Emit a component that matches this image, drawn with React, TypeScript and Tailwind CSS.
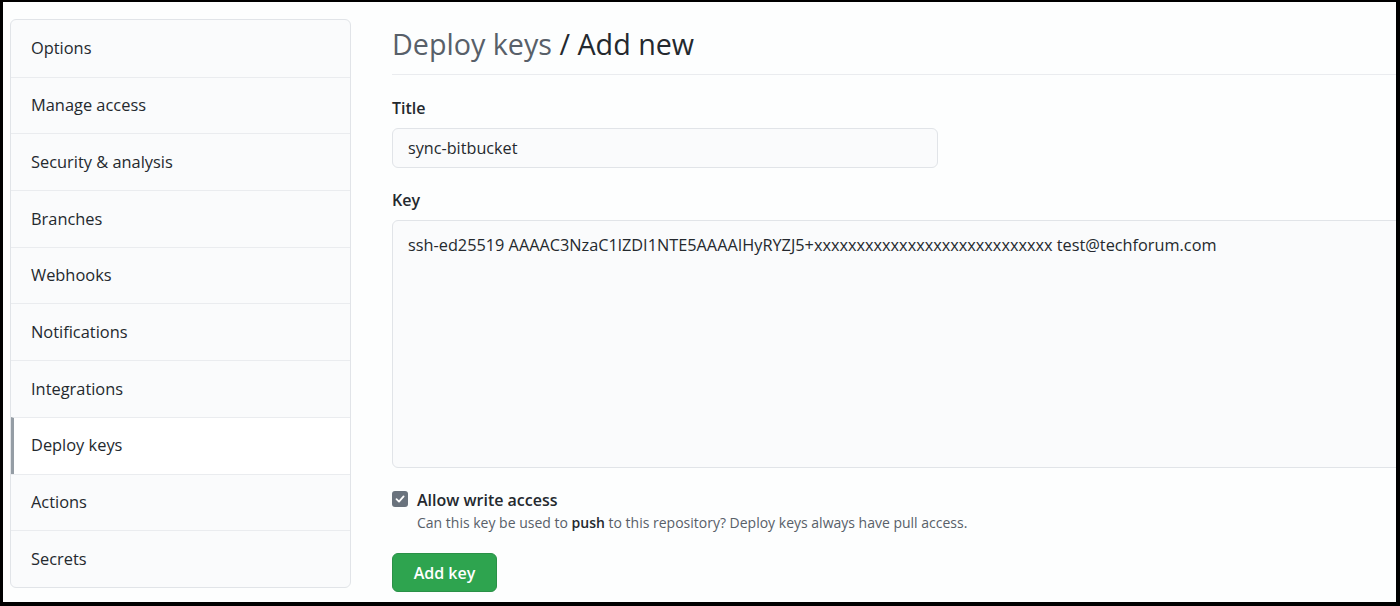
import React from "react";

const items = [
  "Options",
  "Manage access",
  "Security & analysis",
  "Branches",
  "Webhooks",
  "Notifications",
  "Integrations",
  "Deploy keys",
  "Actions",
  "Secrets",
];

export default function App() {
  return (
    <div
      className="w-[1400px] h-[606px] overflow-hidden bg-white border-l-[3px] border-t-[2px] border-r-[4px] border-b-[4px] border-black box-border"
      style={{ fontFamily: '"Open Sans", "Noto Sans", sans-serif' }}
    >
      <div className="flex h-full bg-[#fdfefe]">
        <div className="w-[341px] ml-[7px] mt-[17px] shrink-0">
          <div className="rounded-[6px] border border-[#e1e4e8] bg-[#fafbfc] overflow-hidden">
            {items.map((it, i) => {
              const sel = it === "Deploy keys";
              return (
                <div
                  key={it}
                  className={
                    "h-[56.7px] flex items-center text-[16.4px] text-[#24292e] " +
                    (i > 0 ? "border-t border-[#eaecef] " : "") +
                    (sel ? "bg-white border-l-[3px] border-l-[#959da5] pl-[17px]" : "pl-[20px]")
                  }
                >
                  {it}
                </div>
              );
            })}
          </div>
        </div>
        <div className="flex-1 ml-[41px] min-w-0">
          <div className="mt-[21px] pb-[10px] border-b border-[#eaecef] text-[28.7px] leading-[41px] whitespace-nowrap">
            <span className="text-[#586069]">Deploy keys</span>
            <span className="text-[#24292e]"> / Add new</span>
          </div>
          <div className="mt-[21px] text-[16px] font-semibold text-[#24292e] leading-[24px]">Title</div>
          <div className="mt-[8px] w-[546px] h-[40px] rounded-[6px] border border-[#e1e4e8] bg-[#fafbfc] flex items-center px-[15px] text-[16.2px] text-[#24292e]">
            sync-bitbucket
          </div>
          <div className="mt-[20px] text-[16px] font-semibold text-[#24292e] leading-[24px]">Key</div>
          <div className="mt-[8px] w-[1020px] h-[248px] rounded-l-[6px] border border-[#e1e4e8] bg-[#fafbfc] px-[15px] pt-[12px] text-[16.3px] text-[#24292e] whitespace-nowrap leading-[24px]">
            ssh-ed25519 AAAAC3NzaC1lZDI1NTE5AAAAIHyRYZJ5+xxxxxxxxxxxxxxxxxxxxxxxxxxxx test@techforum.com
          </div>
          <div className="mt-[20px] flex items-start gap-[9px]">
            <div className="mt-[3px] w-[16px] h-[16px] rounded-[3px] bg-[#6a737d] flex items-center justify-center">
              <svg width="12" height="12" viewBox="0 0 12 12">
                <path d="M2.5 6.2 L5 8.6 L9.6 3.4" stroke="white" strokeWidth="1.8" fill="none" strokeLinecap="round" strokeLinejoin="round" />
              </svg>
            </div>
            <div>
              <div className="text-[16px] font-semibold text-[#24292e] leading-[24px]">Allow write access</div>
              <div className="mt-[1px] text-[14px] text-[#586069] leading-[20px]">
                Can this key be used to <span className="font-semibold text-[#24292e]">push</span> to this repository? Deploy keys always have pull access.
              </div>
            </div>
          </div>
          <button className="mt-[20px] w-[105px] h-[39px] rounded-[6px] bg-[#2ea44f] border border-[#2a9147] text-white text-[16px] font-semibold">
            Add key
          </button>
        </div>
      </div>
    </div>
  );
}
